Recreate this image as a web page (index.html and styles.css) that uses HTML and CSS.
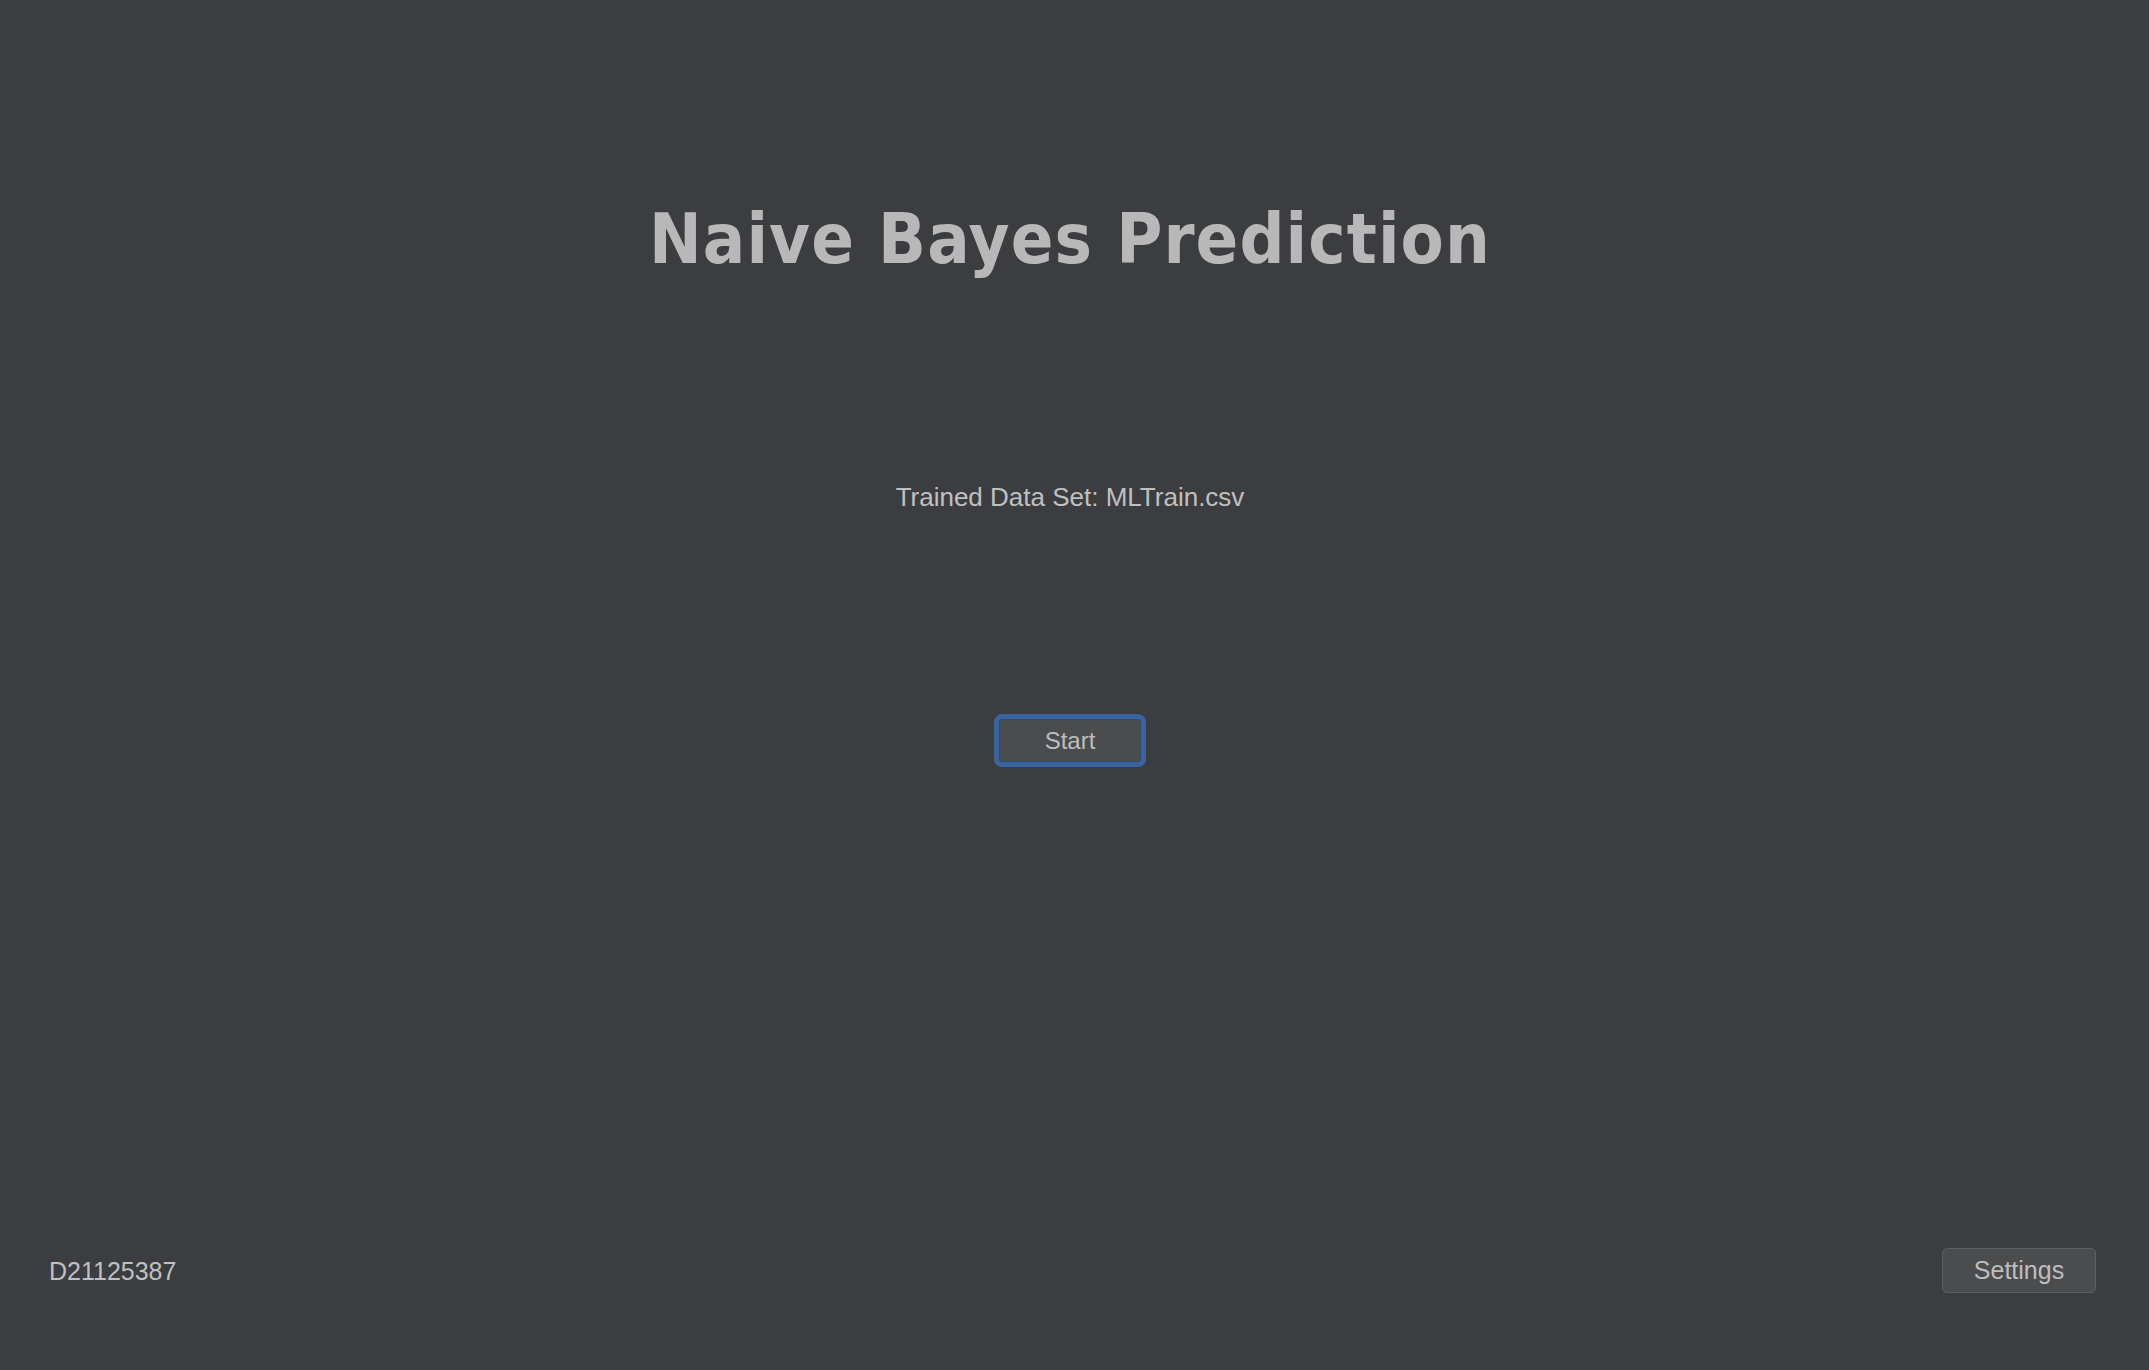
FILE: index.html
```html
<!DOCTYPE html>
<html lang="en">
<head>
<meta charset="utf-8">
<title>Naive Bayes Prediction</title>
<link rel="stylesheet" href="styles.css">
</head>
<body>
<div class="app">
  <main class="main">
    <h1 class="title">Naive Bayes Prediction</h1>
    <p class="dataset">Trained Data Set: MLTrain.csv</p>
    <button class="btn-start" type="button">Start</button>
  </main>
  <footer class="footer">
    <span class="student-id">D21125387</span>
    <button class="btn-settings" type="button">Settings</button>
  </footer>
</div>
</body>
</html>
```
FILE: styles.css
```css
html, body {
  margin: 0;
  padding: 0;
  background: #3b3d40;
}
.app {
  height: 1370px;
  display: flex;
  flex-direction: column;
  font-family: "Liberation Sans", Arial, sans-serif;
  color: #c2c2c2;
}
.main {
  flex: 1;
  display: flex;
  flex-direction: column;
  align-items: center;
  padding-top: 204px;
  padding-right: 9px;
}
.title {
  margin: 0;
  font-family: "DejaVu Sans Condensed", "DejaVu Sans", sans-serif;
  font-weight: bold;
  font-size: 70px;
  line-height: 70px;
  color: #b8b8b8;
  letter-spacing: 1.1px;
}
.dataset {
  margin: 208px 0 0;
  font-size: 26px;
  line-height: 30px;
  color: #c0c0c0;
}
.btn-start {
  margin-top: 202px;
  width: 152px;
  height: 53px;
  box-sizing: border-box;
  border: 5px solid #3a64a0;
  border-radius: 8px;
  background: #4b4c4e;
  box-shadow: inset 0 0 0 1px #2f4a70;
  color: #bdbdbd;
  font-family: "Liberation Sans", Arial, sans-serif;
  font-size: 24px;
  line-height: 43px;
  padding: 0;
}
.footer {
  display: flex;
  justify-content: space-between;
  align-items: center;
  padding: 0 53px 77px 49px;
}
.student-id {
  font-size: 25px;
  line-height: 30px;
  color: #c0c0c0;
}
.btn-settings {
  width: 154px;
  height: 45px;
  box-sizing: border-box;
  border: 1px solid #5e5f61;
  border-radius: 5px;
  background: #4b4c4e;
  color: #bdbdbd;
  font-family: "Liberation Sans", Arial, sans-serif;
  font-size: 25px;
  line-height: 43px;
  padding: 0;
}
```
